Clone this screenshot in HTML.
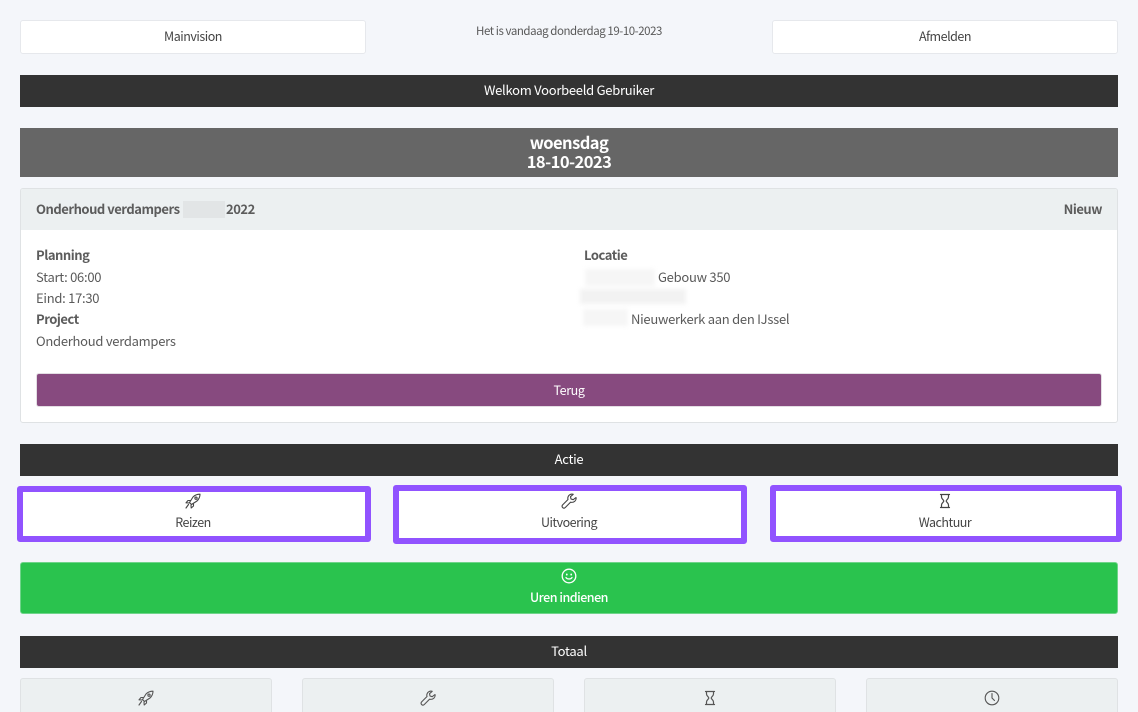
<!DOCTYPE html>
<html lang="nl">
<head>
<meta charset="utf-8">
<title>Mainvision</title>
<style>
html,body{margin:0;padding:0;width:1138px;height:712px;overflow:hidden;background:#f4f6fa;}
body{position:relative;font-family:"Noto Sans CJK JP","Liberation Sans",sans-serif;font-size:13px;letter-spacing:-.27px;color:#5a5a5a;}
.a{position:absolute;box-sizing:border-box;}
.t{position:absolute;white-space:nowrap;line-height:20px;}
.c{text-align:center;}
.btn{background:#fff;border:1px solid #e6e8ec;border-radius:3px;text-align:center;line-height:30px;color:#444;font-size:12.5px;letter-spacing:-.48px;}
.bar{background:#333;color:#fff;text-align:center;line-height:29px;left:20px;width:1098px;height:32px;}
.act{background:#fff;border:6px solid #9153ff;border-radius:3px;}
.tot{background:#ecf0f1;border:1px solid #dfe2e4;border-radius:3px;top:678px;width:252px;height:50px;}
.b{font-weight:700;letter-spacing:-.47px;color:#5c5c5c;}
.l{font-size:12.5px;letter-spacing:-.5px;color:#444;}
.blur{position:absolute;filter:blur(2px);}
svg{position:absolute;fill:none;stroke-linecap:round;stroke-linejoin:round;}
</style>
</head>
<body>
<div class="a btn" style="left:20px;top:20px;width:346px;height:34px;">Mainvision</div>
<div class="t c" style="left:380px;width:378px;top:21px;font-size:11.5px;letter-spacing:-.45px;">Het is vandaag donderdag 19-10-2023</div>
<div class="a btn" style="left:772px;top:20px;width:346px;height:34px;">Afmelden</div>

<div class="a bar" style="top:75px;">Welkom Voorbeeld Gebruiker</div>

<div class="a" style="left:20px;top:128px;width:1098px;height:49px;background:#666;color:#fff;text-align:center;font-size:16.5px;letter-spacing:-.55px;font-weight:700;line-height:19px;padding-top:5px;">woensdag<br>18-10-2023</div>

<div class="a" style="left:20px;top:188px;width:1098px;height:235px;background:#fff;border:1px solid #dfe2e4;border-radius:3px;overflow:hidden;">
  <div style="height:41px;background:#ecf0f1;"></div>
</div>
<div class="t b" style="left:36px;top:199px;">Onderhoud verdampers</div>
<div class="a" style="left:183px;top:201px;width:42px;height:17px;background:#e2e5e6;"></div>
<div class="t b" style="left:226px;top:199px;">2022</div>
<div class="t b" style="right:36px;top:199px;">Nieuw</div>

<div class="t b" style="left:36px;top:245px;">Planning</div>
<div class="t" style="left:36px;top:267px;">Start: 06:00</div>
<div class="t" style="left:36px;top:288px;">Eind: 17:30</div>
<div class="t b" style="left:36px;top:309px;">Project</div>
<div class="t" style="left:36px;top:331px;">Onderhoud verdampers</div>

<div class="t b" style="left:584px;top:245px;">Locatie</div>
<div class="blur" style="left:585px;top:269px;width:70px;height:17px;background:#f6f6f6;"></div>
<div class="t" style="left:658px;top:267px;">Gebouw 350</div>
<div class="blur" style="left:580px;top:289px;width:106px;height:15px;background:#f2f2f2;"></div>
<div class="blur" style="left:583px;top:309px;width:45px;height:17px;background:#f6f6f6;"></div>
<div class="t" style="left:631px;top:309px;">Nieuwerkerk aan den IJssel</div>

<div class="a" style="left:36px;top:373px;width:1066px;height:34px;background:#874a7f;border:1px solid #e3dde3;border-radius:3px;color:#fff;text-align:center;line-height:31px;font-size:12.5px;letter-spacing:-.4px;">Terug</div>

<div class="a bar" style="top:444px;">Actie</div>

<div class="a act" style="left:17px;top:486px;width:354px;height:56px;"></div>
<div class="a act" style="left:393px;top:485px;width:354px;height:59px;"></div>
<div class="a act" style="left:770px;top:485px;width:352px;height:57px;"></div>
<div class="t c l" style="left:17px;width:352px;top:512px;">Reizen</div>
<div class="t c l" style="left:393px;width:352px;top:512px;">Uitvoering</div>
<div class="t c l" style="left:770px;width:350px;top:512px;">Wachtuur</div>

<svg style="left:185px;top:493px;" width="16" height="16" viewBox="0 0 16 16" stroke="#444" stroke-width="1.1">
  <path d="M6 11 4.500 9.500 8 4C10 2 12.500 1.200 15 1.200 15 3.500 14 6 12 8L6.500 11.500Z"/>
  <circle cx="11" cy="5.200" r="1.100"/>
  <path d="M5.500 7.500H3L1 9.800 4.500 10M8.500 11V13L6.200 15 6 12M3.500 11.500 1 15"/>
</svg>
<svg style="left:561px;top:493px;" width="16" height="16" viewBox="0 0 16 16" stroke="#444" stroke-width="1.1">
  <path d="M15 4.500 12.200 6.700 10 6 9.500 3.700 12.200 1.300C9.500.5 6.800 2.500 6.800 5.500L7 6.500 1.500 12C.8 13 1 14 1.800 14.700S3.500 15.300 4.300 14.500L9.500 9.200C12.800 10 15.700 7.500 15 4.500Z"/>
</svg>
<svg style="left:937px;top:493px;" width="16" height="16" viewBox="0 0 16 16" stroke="#444" stroke-width="1.2">
  <path d="M3.500 1.500H12.500M3.500 14.500H12.500M4.500 1.500V4C4.500 6 6.800 6.800 6.800 8S4.500 10 4.500 12V14.500M11.500 1.500V4C11.500 6 9.200 6.800 9.200 8S11.500 10 11.500 12V14.500"/>
</svg>

<div class="a" style="left:20px;top:562px;width:1098px;height:52px;background:#2ac34e;border:1px solid #6fd48a;border-radius:3px;"></div>
<svg style="left:561px;top:568px;" width="16" height="16" viewBox="0 0 16 16" stroke="#fff" stroke-width="1.300">
  <circle cx="8" cy="8" r="6.800"/>
  <path d="M5 9.500C6 11.500 10 11.500 11 9.500"/>
  <path d="M5.800 6.300v.4M10.200 6.300v.4" stroke-width="1.700"/>
</svg>
<div class="t c" style="left:20px;width:1098px;top:587px;color:#fff;font-size:12.5px;letter-spacing:-.5px;font-weight:500;">Uren indienen</div>

<div class="a bar" style="top:636px;">Totaal</div>

<div class="a tot" style="left:20px;"></div>
<div class="a tot" style="left:302px;"></div>
<div class="a tot" style="left:584px;"></div>
<div class="a tot" style="left:866px;"></div>

<svg style="left:138px;top:690px;" width="16" height="16" viewBox="0 0 16 16" stroke="#555" stroke-width="1.1">
  <path d="M6 11 4.500 9.500 8 4C10 2 12.500 1.200 15 1.200 15 3.500 14 6 12 8L6.500 11.500Z"/>
  <circle cx="11" cy="5.200" r="1.100"/>
  <path d="M5.500 7.500H3L1 9.800 4.500 10M8.500 11V13L6.200 15 6 12M3.500 11.500 1 15"/>
</svg>
<svg style="left:420px;top:690px;" width="16" height="16" viewBox="0 0 16 16" stroke="#555" stroke-width="1.1">
  <path d="M15 4.500 12.200 6.700 10 6 9.500 3.700 12.200 1.300C9.500.5 6.800 2.500 6.800 5.500L7 6.500 1.500 12C.8 13 1 14 1.800 14.700S3.500 15.300 4.300 14.500L9.500 9.200C12.800 10 15.700 7.500 15 4.500Z"/>
</svg>
<svg style="left:702px;top:690px;" width="16" height="16" viewBox="0 0 16 16" stroke="#555" stroke-width="1.2">
  <path d="M3.500 1.500H12.500M3.500 14.500H12.500M4.500 1.500V4C4.500 6 6.800 6.800 6.800 8S4.500 10 4.500 12V14.500M11.500 1.500V4C11.500 6 9.200 6.800 9.200 8S11.500 10 11.500 12V14.500"/>
</svg>
<svg style="left:984px;top:690px;" width="16" height="16" viewBox="0 0 16 16" stroke="#555" stroke-width="1.1">
  <circle cx="8" cy="8" r="6.800"/>
  <path d="M8 3.500V8L10.500 10.500"/>
</svg>
</body>
</html>
